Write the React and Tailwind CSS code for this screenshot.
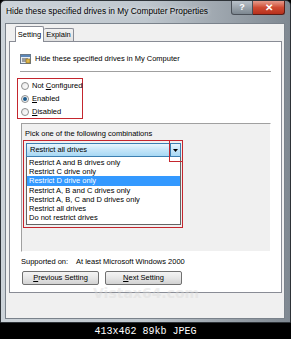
import React from 'react';

const items = [
  'Restrict A and B drives only',
  'Restrict C drive only',
  'Restrict D drive only',
  'Restrict A, B and C drives only',
  'Restrict A, B, C and D drives only',
  'Restrict all drives',
  'Do not restrict drives',
];

const Btn = ({ children, className = '' }) => (
  <div
    className={`flex items-center justify-center h-[14px] rounded-[2px] border border-[#707070] bg-gradient-to-b from-[#f4f4f4] via-[#e6e6e6] to-[#d2d2d2] text-[7.5px] text-black ${className}`}
  >
    {children}
  </div>
);

const Radio = ({ checked, children }) => (
  <div className="flex items-center h-[13.5px] gap-[3px] whitespace-nowrap">
    <div className="shrink-0 w-[8px] h-[8px] rounded-full border border-[#8e8f8f] bg-gradient-to-br from-[#e8e8e8] to-[#ffffff] flex items-center justify-center">
      {checked && <div className="w-[4px] h-[4px] rounded-full bg-[#1d5a8c]" />}
    </div>
    <span>{children}</span>
  </div>
);

export default function App() {
  return (
    <div className="w-[291px] h-[339px] bg-black flex flex-col font-['Liberation_Sans',Arial,sans-serif] overflow-hidden">
      <div className="h-[323px] flex flex-col rounded-t-[5px] border border-[#2e3338] bg-gradient-to-r from-[#ccd3d9] via-[#bfc7ce] to-[#7f8891]">
        <div className="h-[22px] flex items-start justify-between">
          <span className="pl-[5px] pt-[4px] text-[8.4px] whitespace-nowrap text-black [text-shadow:0_0_4px_#fff]">
            Hide these specified drives in My Computer Properties
          </span>
          <div className="flex mr-[5px]">
            <div className="w-[22px] h-[14px] rounded-bl-[3px] border border-[#4a5058] border-t-0 bg-gradient-to-b from-[#b9c1c9] to-[#7d8790] flex items-center justify-center text-white text-[9px] font-bold">
              ?
            </div>
            <div className="w-[32px] h-[14px] rounded-br-[3px] border border-[#5a1d16] border-t-0 border-l-0 bg-gradient-to-b from-[#e59b8c] via-[#cf4b33] to-[#b7301c] flex items-center justify-center text-white text-[10px] font-bold">
              ✕
            </div>
          </div>
        </div>

        <div className="relative h-[296px] ml-[4px] mr-[5px] border border-[#7a828b] bg-[#f0f0f0] flex flex-col">
          <div className="flex ml-[9px] mt-[2px] h-[16px] items-end relative z-10">
            <div className="w-[29px] h-[16px] bg-white border border-[#898c95] border-b-0 rounded-t-[2px] flex items-center justify-center text-[7.5px]">
              Setting
            </div>
            <div className="w-[30px] h-[13px] mb-[1px] bg-gradient-to-b from-[#f2f2f2] to-[#e1e1e1] border border-[#898c95] border-l-0 border-b-0 rounded-t-[2px] flex items-center justify-center text-[7.5px]">
              Explain
            </div>
          </div>

          <div className="h-[252px] ml-[3px] mr-[2px] -mt-[1px] border border-[#898c95] bg-white flex flex-col text-[7.5px] text-black">
            <div className="flex items-center gap-[4px] ml-[10px] mt-[12px] h-[10px]">
              <svg width="11" height="10" viewBox="0 0 11 10">
                <rect x="0.5" y="0.5" width="10" height="9" fill="#e8eef5" stroke="#6b7a8a" />
                <rect x="1" y="1" width="9" height="2" fill="#5b86b8" />
                <path d="M2 5h6M2 7h5" stroke="#4a4a4a" strokeWidth="1" />
                <rect x="6" y="5" width="4" height="4" fill="#e0b84a" stroke="#8a6a1a" strokeWidth="0.6" />
              </svg>
              <span>Hide these specified drives in My Computer</span>
            </div>
            <div className="h-px bg-[#a0a0a0] ml-[10px] mr-[10px] mt-[7px]" />

            <div className="ml-[7px] mt-[6px] w-[66px] h-[41px] border border-[#c4262e] flex flex-col justify-center pl-[3px]">
              <Radio>
                Not <u>C</u>onfigured
              </Radio>
              <Radio checked>
                <u>E</u>nabled
              </Radio>
              <Radio>
                <u>D</u>isabled
              </Radio>
            </div>

            <div className="ml-[11px] mr-[10px] mt-[4px] h-[129px] border border-[#a0a0a0] border-r-white border-b-white bg-[#f0f0f0] flex flex-col">
              <div className="pl-[3px] pt-[4px] h-[16px]">Pick one of the following combinations</div>
              <div className="relative ml-[1px] w-[160px] h-[88px] border border-[#c4262e] p-[2px] flex flex-col">
                <div className="h-[14px] w-[155px] border border-[#3c7fb1] bg-gradient-to-b from-[#eaf6fd] via-[#c4e5f8] to-[#a7d8f4] flex items-center">
                  <span className="pl-[3px] flex-1">Restrict all drives</span>
                  <div className="w-[10px] h-full border-l border-[#3c7fb1] flex items-center justify-center">
                    <svg width="5" height="3" viewBox="0 0 5 3">
                      <path d="M0 0h5L2.5 3z" fill="#000" />
                    </svg>
                  </div>
                </div>
                <div className="w-[155px] h-[68px] bg-white border border-[#646464] border-t-0 flex flex-col pt-[1px]">
                  {items.map((t, i) => (
                    <div
                      key={t}
                      className={`h-[9.2px] leading-[9.2px] pl-[2px] ${i === 2 ? 'bg-[#3399ff] text-white' : ''}`}
                    >
                      {t}
                    </div>
                  ))}
                </div>
                <div className="absolute -top-[1px] -right-[1px] w-[14px] h-[22px] border border-[#c4262e]" />
              </div>
            </div>

            <div className="flex items-center ml-[11px] mt-[5px] h-[10px]">
              <span className="w-[55px]">Supported on:</span>
              <span>At least Microsoft Windows 2000</span>
            </div>
            <div className="flex gap-[6px] ml-[12px] mt-[4px]">
              <Btn className="w-[77px]">
                <span>
                  <u>P</u>revious Setting
                </span>
              </Btn>
              <Btn className="w-[77px]">
                <span>
                  <u>N</u>ext Setting
                </span>
              </Btn>
            </div>
          </div>

          <div className="absolute left-[87px] top-[263px] leading-[13px] text-[14px] font-bold text-[#d8d8d8] opacity-40 font-['DejaVu_Sans',sans-serif] pointer-events-none">
            Vistax64.com
          </div>
        </div>
      </div>

      <div className="h-[16px] flex items-center justify-center text-white text-[10px] font-['Liberation_Mono',monospace]">
        413x462 89kb JPEG
      </div>
    </div>
  );
}
